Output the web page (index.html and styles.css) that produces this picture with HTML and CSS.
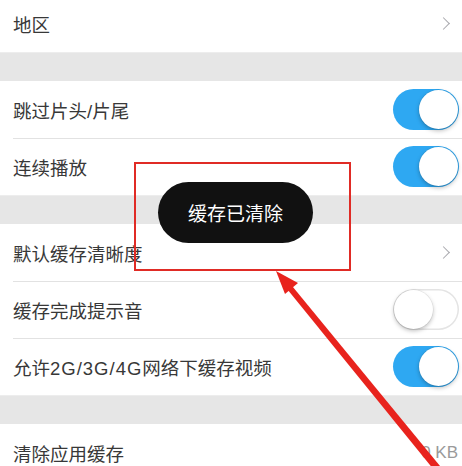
FILE: index.html
```html
<!DOCTYPE html>
<html lang="zh-CN">
<head>
  <meta charset="UTF-8" />
  <meta name="viewport" content="width=device-width, initial-scale=1.0"/>
  <title>设置</title>
  <link rel="stylesheet" href="styles.css">
</head>
<body>

  <div class="settings">
    <div class="row first">
      <span class="label">地区</span>
      <span class="chevron"></span>
    </div>

    <div class="band"></div>

    <div class="row">
      <span class="label">跳过片头/片尾</span>
      <span class="switch on"><span class="knob"></span></span>
    </div>
    <div class="row">
      <span class="label">连续播放</span>
      <span class="switch on"><span class="knob"></span></span>
    </div>

    <div class="band"></div>

    <div class="row">
      <span class="label">默认缓存清晰度</span>
      <span class="chevron"></span>
    </div>
    <div class="row">
      <span class="label">缓存完成提示音</span>
      <span class="switch"><span class="knob"></span></span>
    </div>
    <div class="row">
      <span class="label">允许<span class="latin">2G/3G/4G</span>网络下缓存视频</span>
      <span class="switch on"><span class="knob"></span></span>
    </div>

    <div class="band"></div>

    <div class="row">
      <span class="label">清除应用缓存</span>
      <span class="value">0 KB</span>
    </div>
  </div>

  <!-- toast + annotation -->
  <div class="mark-box"></div>
  <div class="toast">缓存已清除</div>

  <svg class="arrow" width="462" height="466" viewBox="0 0 462 466">
    <polygon points="283,284 288,281 440,466 434,470" fill="#e8231d"/>
    <polygon points="276,271 298,283 285,294" fill="#e8231d"/>
  </svg>

</body>
</html>
```

FILE: styles.css
```css
body {
  margin: 0;
  width: 462px;
  height: 466px;
  overflow: hidden;
  position: relative;
  background: #fff;
  font-family: "Liberation Sans", "Noto Sans CJK SC", sans-serif;
  color: #383838;
}

.settings {
  margin-top: -5px;
}

.row {
  height: 57px;
  display: flex;
  align-items: center;
  justify-content: space-between;
  padding: 0 3px 0 13px;
  position: relative;
  background: #fff;
}

.row + .row::before {
  content: "";
  position: absolute;
  top: 0;
  left: 13px;
  right: 0;
  border-top: 1px solid #e2e2e2;
}

.label {
  font-size: 18.5px;
}

.latin {
  letter-spacing: 1px;
}

.band {
  height: 28px;
  background: #e6e6e6;
  border-top: 1px solid #ededed;
}

.chevron {
  width: 8px;
  height: 8px;
  margin-right: 11px;
  border-top: 1.5px solid #a8a8ad;
  border-right: 1.5px solid #a8a8ad;
  transform: rotate(45deg);
}

.value {
  font-size: 17px;
  color: #9a9a9a;
  margin-right: 1px;
}

.switch {
  width: 66px;
  height: 41px;
  border-radius: 21px;
  background: #fff;
  box-shadow: inset 0 0 0 1.5px #e4e4e4;
  position: relative;
  box-sizing: border-box;
}

.switch.on {
  background: #2ea8f2;
  box-shadow: none;
}

.knob {
  position: absolute;
  top: 1px;
  left: 1px;
  width: 39px;
  height: 39px;
  border-radius: 50%;
  background: #fff;
  box-shadow: 0 2px 4px rgba(0, 0, 0, 0.25), 0 0 0 0.5px rgba(0, 0, 0, 0.08);
}

.switch.on .knob {
  left: 26px;
}

/* overlay */
.toast {
  position: absolute;
  left: 158px;
  top: 182px;
  width: 155px;
  height: 61px;
  border-radius: 31px;
  background: #111;
  color: #fff;
  font-size: 19px;
  display: flex;
  align-items: center;
  justify-content: center;
}

.mark-box {
  position: absolute;
  left: 134px;
  top: 162px;
  width: 213px;
  height: 105px;
  border: 2px solid #e02b25;
}

.arrow {
  position: absolute;
  left: 0;
  top: 0;
}
```
